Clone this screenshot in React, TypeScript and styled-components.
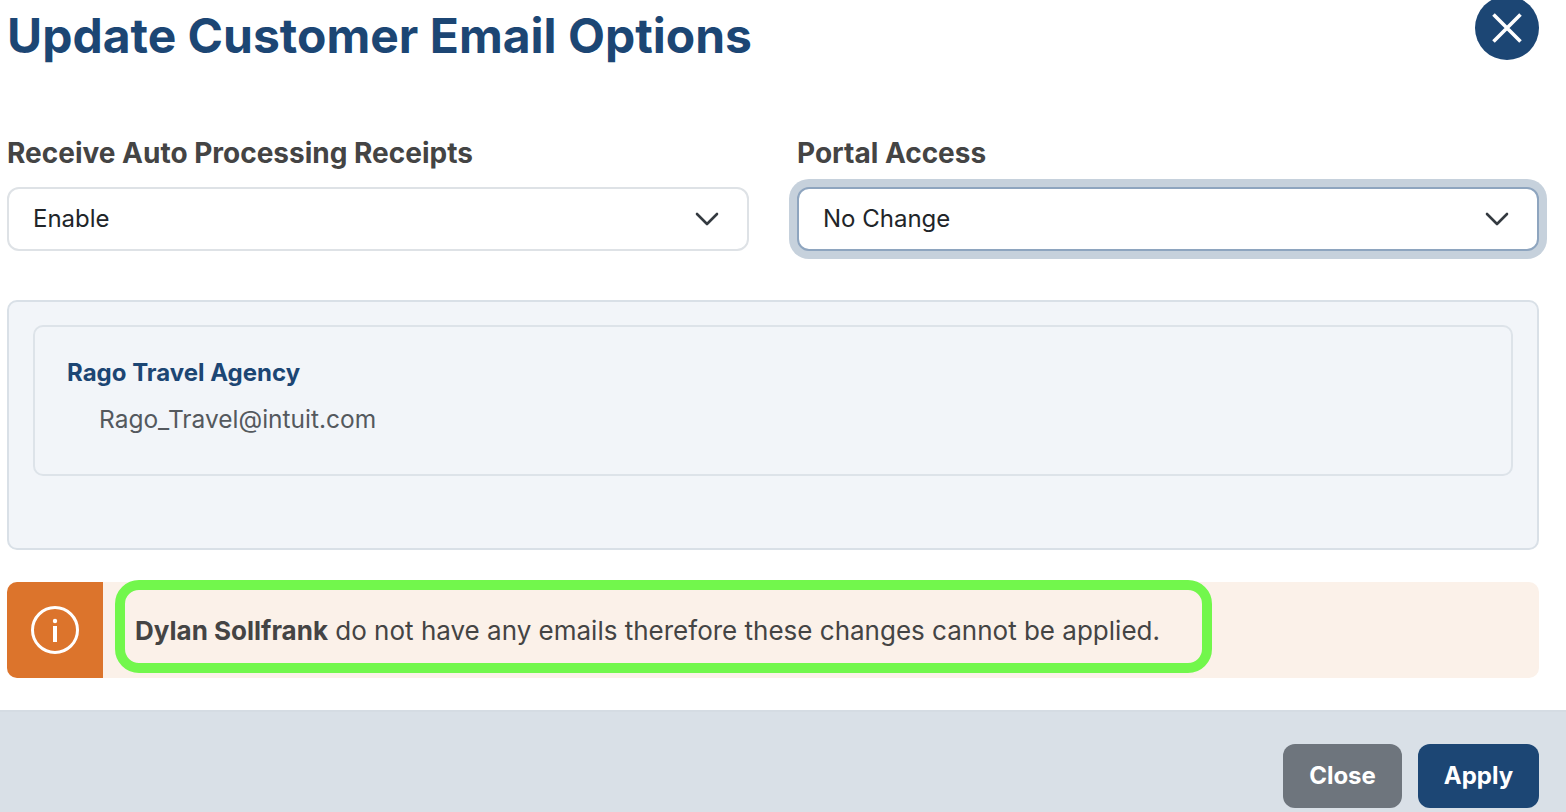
import React from 'react';
import styled, { createGlobalStyle } from 'styled-components';

const GlobalStyle = createGlobalStyle`
  html, body {
    margin: 0;
    padding: 0;
    height: 100%;
    overflow: hidden;
    background: #ffffff;
    font-family: Inter, "Liberation Sans", sans-serif;
  }
  * { box-sizing: border-box; }
`;

const Modal = styled.div`
  width: 1566px;
  height: 812px;
  display: flex;
  flex-direction: column;
  overflow: hidden;
`;

const Body = styled.div`
  flex: 1;
  padding: 0 27px 0 7px;
`;

const Header = styled.div`
  height: 136px;
  display: flex;
  justify-content: space-between;
  align-items: flex-start;
`;

const Title = styled.h1`
  margin: 7px 0 0 0;
  font-size: 48px;
  line-height: 58px;
  font-weight: 700;
  color: #1c4674;
`;

const CloseCircle = styled.button`
  width: 64px;
  height: 64px;
  margin-top: -4px;
  padding: 0;
  border: 0;
  border-radius: 50%;
  background: #1c4674;
  display: flex;
  align-items: center;
  justify-content: center;
`;

const FieldRow = styled.div`
  display: grid;
  grid-template-columns: 742px 742px;
  column-gap: 48px;
`;

const Field = styled.div`
  display: flex;
  flex-direction: column;
`;

const Label = styled.label`
  font-size: 28px;
  line-height: 34px;
  font-weight: 700;
  color: #444444;
  margin-bottom: 17px;
`;

const Select = styled.div<{ $focused?: boolean }>`
  height: 64px;
  padding: 0 28px 1px 24px;
  display: flex;
  align-items: center;
  justify-content: space-between;
  background: #ffffff;
  border: 2px solid ${({ $focused }) => ($focused ? '#8ea5bf' : '#dee2e6')};
  border-radius: 12px;
  box-shadow: ${({ $focused }) => ($focused ? '0 0 0 8px #c6d1dc' : 'none')};
  font-size: 24px;
  color: #212529;
`;

const Panel = styled.div`
  margin-top: 49px;
  height: 250px;
  padding: 23px 24px;
  background: #f2f5f9;
  border: 2px solid #d9e0e7;
  border-radius: 10px;
`;

const AccountCard = styled.div`
  height: 151px;
  padding: 30px 32px;
  border: 2px solid #dde3e9;
  border-radius: 10px;
`;

const AccountName = styled.div`
  font-size: 24px;
  line-height: 32px;
  font-weight: 700;
  color: #1c4674;
`;

const AccountEmail = styled.div`
  margin: 14px 0 0 32px;
  font-size: 24.5px;
  line-height: 32px;
  color: #54595e;
`;

const Alert = styled.div`
  position: relative;
  margin-top: 32px;
  height: 96px;
  display: flex;
  background: #fbf1e9;
  border-radius: 10px;
  overflow: visible;
`;

const AlertIcon = styled.div`
  width: 96px;
  flex: none;
  display: flex;
  align-items: center;
  justify-content: center;
  background: #dc742c;
  border-radius: 10px 0 0 10px;
`;

const AlertText = styled.div`
  padding-left: 32px;
  display: flex;
  align-items: center;
  white-space: pre;
  font-size: 26px;
  color: #444444;
  strong { font-weight: 700; }
`;

const Highlight = styled.div`
  position: absolute;
  left: 108px;
  top: -2px;
  width: 1097px;
  height: 93px;
  border: 10px solid #72f74c;
  border-radius: 24px;
  pointer-events: none;
`;

const Footer = styled.div`
  height: 102px;
  flex: none;
  padding: 32px 27px 0 0;
  display: flex;
  justify-content: flex-end;
  gap: 16px;
  background: #d9e0e7;
  border-top: 2px solid #d5dce3;
`;

const FooterButton = styled.button<{ $primary?: boolean }>`
  width: ${({ $primary }) => ($primary ? '121px' : '119px')};
  height: 64px;
  padding: 0 0 2px;
  border: 0;
  border-radius: 12px;
  background: ${({ $primary }) => ($primary ? '#1c4674' : '#6e757d')};
  color: #ffffff;
  font-family: inherit;
  font-size: 24px;
  font-weight: 700;
`;

const Chevron = () => (
  <svg width="24" height="24" viewBox="0 0 24 24" fill="none" stroke="#343a40" strokeWidth="2.6" strokeLinecap="round" strokeLinejoin="round">
    <path d="M2 7 L12 17 L22 7" />
  </svg>
);

export default function App() {
  return (
    <>
      <GlobalStyle />
      <Modal>
        <Body>
          <Header>
            <Title>Update Customer Email Options</Title>
            <CloseCircle aria-label="Close">
              <svg width="32" height="32" viewBox="0 0 32 32" fill="none" stroke="#ffffff" strokeWidth="3.6">
                <path d="M2.5 2.5 L29.5 29.5 M29.5 2.5 L2.5 29.5" />
              </svg>
            </CloseCircle>
          </Header>
          <FieldRow>
            <Field>
              <Label>Receive Auto Processing Receipts</Label>
              <Select>
                Enable
                <Chevron />
              </Select>
            </Field>
            <Field>
              <Label>Portal Access</Label>
              <Select $focused>
                No Change
                <Chevron />
              </Select>
            </Field>
          </FieldRow>
          <Panel>
            <AccountCard>
              <AccountName>Rago Travel Agency</AccountName>
              <AccountEmail>Rago_Travel@intuit.com</AccountEmail>
            </AccountCard>
          </Panel>
          <Alert>
            <AlertIcon>
              <svg width="48" height="48" viewBox="0 0 48 48" fill="none" stroke="#ffffff" strokeWidth="3">
                <circle cx="24" cy="24" r="22.5" />
                <path d="M24 20 V36" strokeWidth="4" />
                <circle cx="24" cy="15" r="2.2" fill="#ffffff" stroke="none" />
              </svg>
            </AlertIcon>
            <AlertText>
              <strong>Dylan Sollfrank</strong> do not have any emails therefore these changes cannot be applied.
            </AlertText>
            <Highlight />
          </Alert>
        </Body>
        <Footer>
          <FooterButton>Close</FooterButton>
          <FooterButton $primary>Apply</FooterButton>
        </Footer>
      </Modal>
    </>
  );
}
